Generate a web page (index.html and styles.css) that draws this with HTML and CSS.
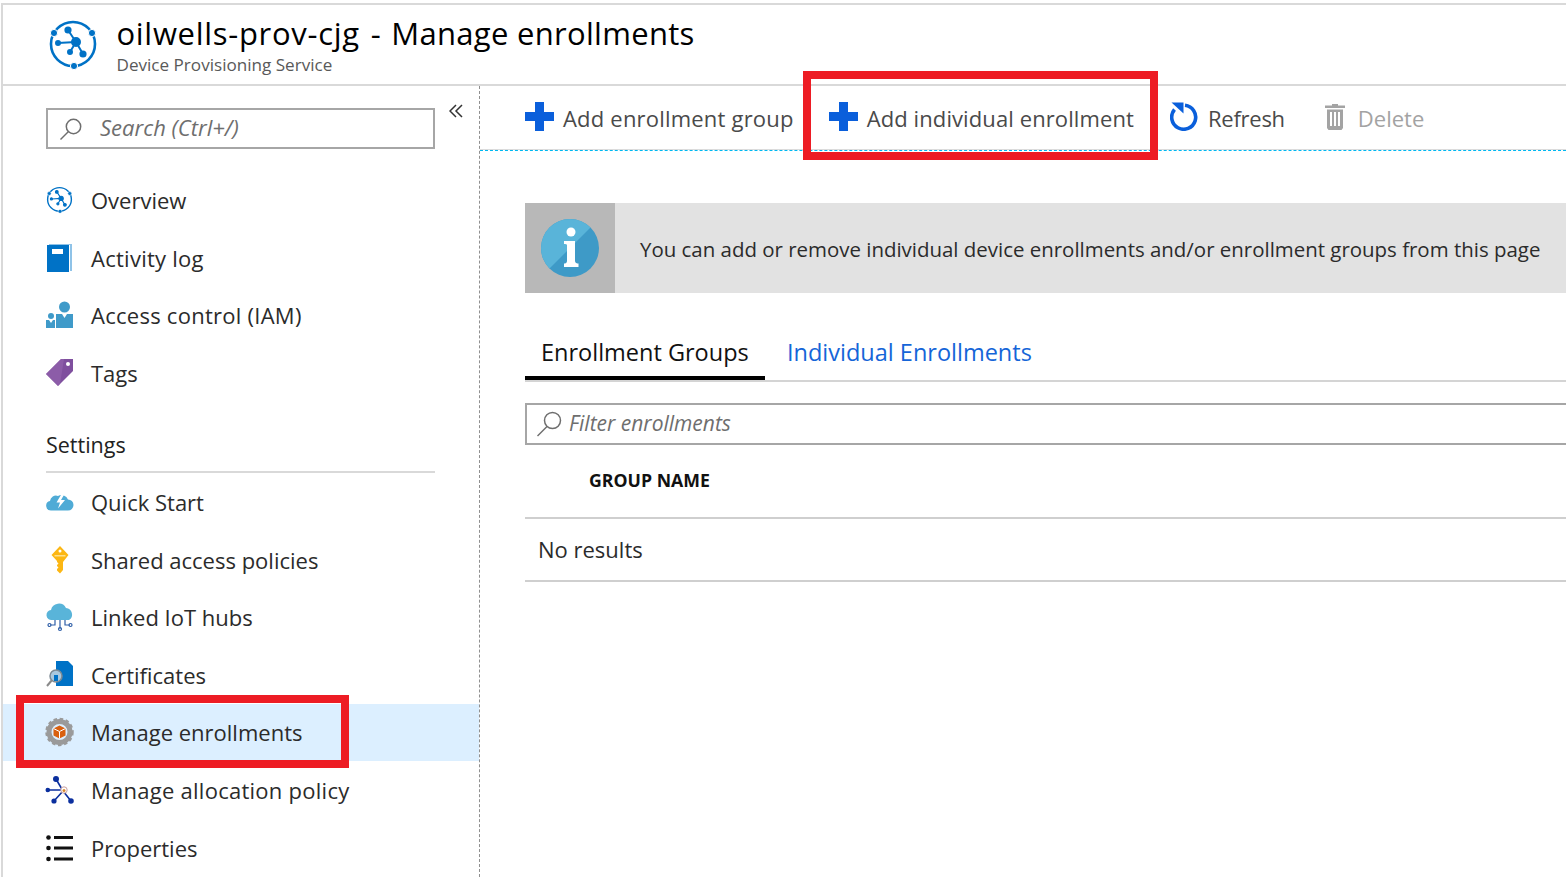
FILE: index.html
```html
<!DOCTYPE html>
<html lang="en">
<head>
<meta charset="utf-8">
<title>Manage enrollments</title>
<link rel="stylesheet" href="styles.css">
</head>
<body>
<div class="page">
  <header class="header">
    <svg class="header-icon" viewBox="0 0 50 50"><use href="#dps"/></svg>
    <div class="header-text">
      <h1 class="title"><span class="title-name">oilwells-prov-cjg</span><span class="title-sep">-</span><span class="title-page">Manage enrollments</span></h1>
      <div class="subtitle">Device Provisioning Service</div>
    </div>
  </header>
  <div class="body">
    <aside class="sidebar">
      <div class="search-row">
        <div class="search">
          <svg class="search-icon" viewBox="0 0 24 24"><circle cx="14.5" cy="9.5" r="7.2"/><path d="M9.5 14.5L1.5 22.5"/></svg>
          <span class="search-text">Search (Ctrl+/)</span>
        </div>
        <svg class="collapse" viewBox="0 0 14 14"><path d="M7 1L1 7l6 6M13 1L7 7l6 6"/></svg>
      </div>
      <nav class="nav nav-top">
        <a class="nav-item"><svg class="nav-icon" viewBox="0 0 50 50"><use href="#dps"/></svg>Overview</a>
        <a class="nav-item nav-wide"><svg class="nav-icon" viewBox="0 0 27 28"><path fill="#8fc3e8" d="M3 0h23v27H3z"/><path fill="#fff" d="M3 1h21v26H3z"/><path fill="#0072c6" d="M1 1h22v27H1z"/><path fill="#fff" d="M6 5h11v5H6z"/></svg>Activity log</a>
        <a class="nav-item nav-wide"><svg class="nav-icon" viewBox="0 0 27 28"><circle cx="18.500" cy="6" r="5.500" fill="#3f9ac9"/><path fill="#3f9ac9" d="M10 13h6l2.500 4 2.500-4h6v14H10z"/><circle cx="5" cy="15" r="3" fill="#3f9ac9"/><path fill="#3f9ac9" d="M0 19h3l2 3 2-3h2v8H0z"/></svg>Access control (IAM)</a>
        <a class="nav-item"><svg class="nav-icon" viewBox="0 0 27 28"><path fill="#7f4f9e" d="M0 15L15 0h12v12L12 27z"/><path fill="#9262ad" d="M0 15L15 0h3L14 25l-2 2z" opacity=".7"/><circle cx="22" cy="5" r="2" fill="#fff"/></svg>Tags</a>
      </nav>
      <div class="nav-heading">Settings</div>
      <nav class="nav nav-settings">
        <a class="nav-item"><svg class="nav-icon" viewBox="0 0 27 28"><path fill="#4fabd6" d="M5 22.500a4.800 4.800 0 0 1-1-9.500 6 6 0 0 1 8-5 7 7 0 0 1 10 3.500 5.500 5.500 0 0 1 0 11z"/><path fill="#fff" d="M15.500 6l-5 8.500h3.500l-2 6 7-8.500h-4l3.500-6z"/></svg>Quick Start</a>
        <a class="nav-item"><svg class="nav-icon" viewBox="0 0 27 28"><path fill="#fcb714" d="M14 0l8.500 9-5.500 7v8l-3 3.500-3-3v-1.500l1.500-1.500-1.500-1.500v-1l1.500-1.500-1.500-1.500v-1L5.500 9z"/><circle cx="14" cy="5" r="1.500" fill="#fff"/><path fill="#ffe08a" d="M8.500 9h11v1.500h-11z"/></svg>Shared access policies</a>
        <a class="nav-item"><svg class="nav-icon" viewBox="0 0 27 28"><path fill="#59b4d9" d="M6 17a5 5 0 0 1-1-10 8 8 0 0 1 15-2 6.500 6.500 0 0 1 3 12z"/><path class="wire" d="M14 17v9M9 17v5H4M19 17v5h5"/><circle cx="14" cy="26" r="1.500" class="node"/><circle cx="3.500" cy="22" r="1.500" class="node"/><circle cx="24.500" cy="22" r="1.500" class="node"/></svg>Linked IoT hubs</a>
        <a class="nav-item"><svg class="nav-icon" viewBox="0 0 27 28"><path fill="#0072c6" d="M10 0h12l5 5v20H10z"/><circle cx="10" cy="15" r="6" fill="#a9c8de" stroke="#7d8a94" stroke-width="1.500"/><path fill="#0072c6" d="M8 14h4v6H8z"/><path stroke="#8a8a8a" stroke-width="2" d="M6 19l-5 6"/></svg>Certificates</a>
        <a class="nav-item active"><svg class="nav-icon" viewBox="0 0 27 28"><circle cx="13.500" cy="14" r="10.500" fill="none" stroke="#9a9a9a" stroke-width="5"/><circle cx="13.500" cy="14" r="13" fill="none" stroke="#9a9a9a" stroke-width="2.500" stroke-dasharray="3.500 2.600"/><path fill="#d9600f" d="M13.500 7.500l6 3v7l-6 3-6-3v-7z"/><path stroke="#fff" fill="none" d="M7.500 10.500l6 3 6-3M13.500 13.500v7"/></svg>Manage enrollments</a>
        <a class="nav-item nav-wide"><svg class="nav-icon" viewBox="0 0 27 28"><g fill="#0b2f9e" stroke="#0b2f9e" stroke-width="1.600"><path d="M10 3l7 12M1 14h16M8 25l9-10M25 25l-8-10"/><circle cx="10" cy="3" r="2.200"/><circle cx="1.800" cy="14" r="1.500"/><circle cx="8" cy="25" r="1.800"/><circle cx="25" cy="25" r="2"/></g><circle cx="18" cy="14" r="3.200" fill="#fff" stroke="#c9a0a0"/><circle cx="18" cy="14.500" r="1.500" fill="#d9882f"/></svg>Manage allocation policy</a>
        <a class="nav-item"><svg class="nav-icon" viewBox="0 0 27 28"><g fill="#111"><circle cx="2.500" cy="3.500" r="2.300"/><circle cx="2.500" cy="14" r="2.300"/><circle cx="2.500" cy="25" r="2.300"/><rect x="8" y="2" width="19" height="3"/><rect x="8" y="12.500" width="19" height="3"/><rect x="8" y="23.500" width="19" height="3"/></g></svg>Properties</a>
      </nav>
    </aside>
    <main class="main">
      <div class="toolbar">
        <button class="tool tool-group"><svg class="tool-icon" viewBox="0 0 29 29"><path fill="#0a5fdb" d="M10 0h9v10h10v9H19v10h-9V19H0v-9h10z"/></svg>Add enrollment group</button>
        <button class="tool tool-individual"><svg class="tool-icon" viewBox="0 0 29 29"><path fill="#0a5fdb" d="M10 0h9v10h10v9H19v10h-9V19H0v-9h10z"/></svg>Add individual enrollment</button>
        <button class="tool tool-refresh"><svg class="refresh-icon" viewBox="0 0 28 29"><path fill="none" stroke="#0a5fdb" stroke-width="3.600" d="M15 3.300A12 12 0 1 1 4.500 7.500"/><path fill="#0a5fdb" d="M1.500.5h12v11z"/></svg>Refresh</button>
        <button class="tool tool-delete"><svg class="trash-icon" viewBox="0 0 20 26"><path fill="#a3a3a3" d="M7 0h6v1.500h7v2.500H0V1.500h7zM2 5.500h16V24l-1.500 2h-13L2 24zM5 8v14h2V8zm4 0v14h2V8zm4 0v14h2V8z" fill-rule="evenodd"/></svg>Delete</button>
      </div>
      <div class="content">
        <div class="banner">
          <div class="banner-icon">
            <svg viewBox="0 0 58 58" class="info-icon"><circle cx="29" cy="29" r="29" fill="#3e9ac7"/><path fill="#59b4d9" d="M8.500 8.500a29 29 0 0 1 41 0l-41 41a29 29 0 0 1 0-41z"/><circle cx="30" cy="13" r="4.500" fill="#fff"/><path fill="#fff" d="M23 22h11v20c0 2 2 2.500 3.500 2.500V48H23v-3.500c1.500 0 3-.5 3-2.500V26c0-1-1.500-1-3-1z"/></svg>
          </div>
          <p class="banner-text">You can add or remove individual device enrollments and/or enrollment groups from this page</p>
        </div>
        <div class="tabs">
          <span class="tab tab-active">Enrollment Groups</span>
          <span class="tab tab-link">Individual Enrollments</span>
        </div>
        <div class="filter">
          <svg class="filter-icon" viewBox="0 0 26 26"><circle cx="16.500" cy="9.500" r="8"/><path d="M11 15.500L1.500 25"/></svg>
          <span class="filter-text">Filter enrollments</span>
        </div>
        <div class="table-head">GROUP NAME</div>
        <div class="table-empty">No results</div>
      </div>
    </main>
  </div>
  <div class="callout callout-nav"></div>
  <div class="callout callout-tool"></div>
</div>
<svg class="defs" width="0" height="0">
  <symbol id="dps" viewBox="0 0 50 50">
    <circle cx="25" cy="24" r="22" fill="none" stroke="#0072c6" stroke-width="2.600"/>
    <g stroke="#0072c6" stroke-width="2" fill="#0072c6">
      <path d="M28 22L20 10M28 22L10 23M28 22L22 32M28 22L35 34"/>
      <circle cx="28" cy="22" r="4"/><circle cx="20" cy="10" r="2.600"/><circle cx="10" cy="23" r="2"/><circle cx="22" cy="32" r="2"/><circle cx="35" cy="34" r="2.600"/>
    </g>
    <g fill="#0072c6" stroke="#fff" stroke-width="1"><circle cx="6" cy="13" r="3.600"/><circle cx="44" cy="13" r="3.600"/><circle cx="26" cy="46" r="3.600"/></g>
  </symbol>
</svg>
</body>
</html>
```

FILE: styles.css
```css
* { box-sizing: border-box; }
html, body { margin: 0; padding: 0; background: #fff; }
body { font-family: "Open Sans", "Noto Sans", sans-serif; color: #2b2b2b; }
.defs { position: absolute; }
.page {
  position: relative;
  width: 1566px;
  height: 877px;
  overflow: hidden;
  padding-top: 3px;
}
.header {
  height: 83px;
  margin-left: 1px;
  border-top: 2px solid #d9d9d9;
  border-left: 2px solid #d9d9d9;
  border-bottom: 2px solid #d9d9d9;
  display: flex;
  align-items: flex-start;
  padding-left: 45px;
}
.header-icon { width: 50px; height: 50px; margin-top: 15px; flex: none; }
.header-text { margin-left: 18.500px; padding-top: 7px; }
.title { display: flex; margin: 0; font-size: 31px; line-height: 42px; font-weight: 400; color: #000; white-space: nowrap; }
.title-name { letter-spacing: .7px; }
.title-sep { margin-left: 11px; }
.title-page { margin-left: 10.500px; letter-spacing: .3px; }
.subtitle { font-size: 17.100px; line-height: 22px; color: #595959; }
.body { display: flex; height: 791px; margin-left: 1px; border-left: 2px solid #d9d9d9; }
.sidebar { width: 477px; flex: none; border-right: 1px dashed #8f8f8f; }
.search-row { display: flex; align-items: flex-start; padding: 22px 0 0 43px; }
.search {
  width: 389px;
  height: 41px;
  border: 2px solid #a6a6a6;
  display: flex;
  align-items: center;
  font-size: 22px;
  font-style: italic;
  color: #6e6e6e;
}
.search-text { margin-top: -4px; }
.search-icon { width: 24px; height: 24px; margin: 0 17px 0 11px; fill: none; stroke: #6e6e6e; stroke-width: 1.500; flex: none; }
.collapse { width: 14px; height: 14px; margin: -4px 0 0 14px; fill: none; stroke: #333; stroke-width: 1.500; }
.nav { display: flex; flex-direction: column; }
.nav-top { margin-top: 22.500px; }
.nav-item {
  height: 57.600px;
  display: flex;
  align-items: center;
  padding-left: 43px;
  font-size: 22px;
  color: #2b2b2b;
  white-space: nowrap;
}
.nav-wide { letter-spacing: .26px; }
.nav-item.active { background: #dcefff; }
.nav-icon { width: 27px; height: 28px; margin-right: 18px; flex: none; overflow: visible; }
.wire { fill: none; stroke: #2f5fa8; stroke-width: 1.200; }
.node { fill: none; stroke: #2f5fa8; stroke-width: 1.200; }
.nav-heading {
  margin: 28.400px 0 0 43px;
  width: 389px;
  height: 43px;
  border-bottom: 2px solid #d9d9d9;
  font-size: 21.500px;
  font-weight: 400;
  color: #222;
  line-height: 30px;
}
.main { flex: 1; min-width: 0; }
.toolbar {
  height: 65px;
  border-bottom: 1px dashed #00b7f0;
  box-shadow: inset 0 -1px #dcdcdc;
  display: flex;
  align-items: center;
  padding-left: 45px;
}
.tool {
  display: flex;
  align-items: center;
  border: 0;
  background: none;
  padding: 0;
  font: inherit;
  font-size: 22px;
  color: #4a4a4a;
  white-space: nowrap;
}
.tool-group { letter-spacing: .2px; }
.tool-individual { margin-left: 35px; letter-spacing: .1px; }
.tool-icon { width: 29px; height: 29px; margin: -3px 9px 0 0; flex: none; }
.tool-refresh { margin-left: 36px; letter-spacing: -.25px; }
.refresh-icon { width: 28px; height: 29px; margin: -3px 10px 0 0; flex: none; }
.tool-delete { margin-left: 41px; color: #a3a3a3; }
.trash-icon { width: 20px; height: 26px; margin: -3px 13px 0 -1px; flex: none; }
.content { padding: 52px 0 0 45px; }
.banner { display: flex; align-items: center; height: 90px; background: #e2e2e2; }
.banner-icon { width: 90px; height: 90px; background: #b8b8b8; display: flex; align-items: center; justify-content: center; flex: none; }
.info-icon { width: 58px; height: 58px; }
.banner-text { margin: 2px 0 0 25px; font-size: 20.460px; color: #2b2b2b; white-space: nowrap; }
.tabs { display: flex; margin-top: 38px; height: 51px; border-bottom: 2px solid #d4d4d4; }
.tab { font-size: 23.500px; line-height: 42px; height: 49px; white-space: nowrap; }
.tab-active { width: 240px; padding-left: 16px; color: #111; border-bottom: 4px solid #000; }
.tab-link { margin-left: 22px; color: #1565d8; }
.filter {
  margin-top: 21px;
  height: 42px;
  border: 2px solid #a6a6a6;
  border-right: 0;
  display: flex;
  align-items: center;
  font-size: 21px;
  font-style: italic;
  color: #6e6e6e;
}
.filter-text { margin-top: -2px; }
.filter-icon { width: 26px; height: 26px; margin: 0 7px 0 9px; fill: none; stroke: #6e6e6e; stroke-width: 1.500; flex: none; }
.table-head {
  height: 74px;
  padding: 22px 0 0 64px;
  font-size: 17.700px;
  line-height: 26px;
  font-weight: 700;
  color: #111;
  border-bottom: 2px solid #cfcfcf;
}
.table-empty {
  height: 63px;
  padding-left: 13px;
  line-height: 60px;
  font-size: 22px;
  color: #2b2b2b;
  border-bottom: 2px solid #cfcfcf;
}
.callout { position: absolute; border: 8px solid #ed1c24; pointer-events: none; }
.callout-nav { left: 16px; top: 695px; width: 333px; height: 73px; }
.callout-tool { left: 803px; top: 71px; width: 355px; height: 89px; }
```
